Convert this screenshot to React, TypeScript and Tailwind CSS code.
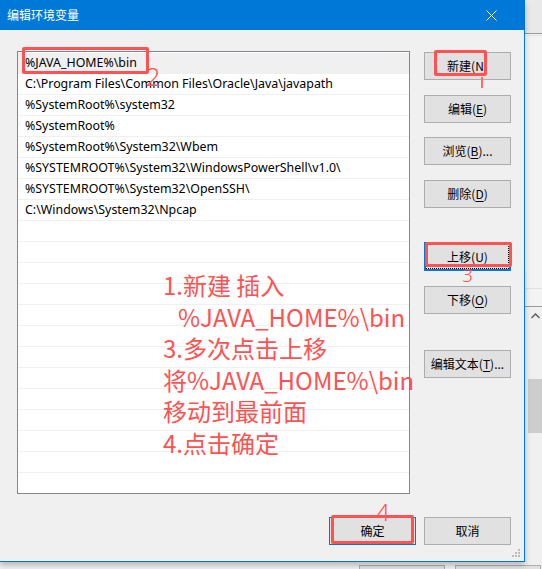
import React from 'react';

const rows = [
    '%JAVA_HOME%\\bin',
    'C:\\Program Files\\Common Files\\Oracle\\Java\\javapath',
    '%SystemRoot%\\system32',
    '%SystemRoot%',
    '%SystemRoot%\\System32\\Wbem',
    '%SYSTEMROOT%\\System32\\WindowsPowerShell\\v1.0\\',
    '%SYSTEMROOT%\\System32\\OpenSSH\\',
    'C:\\Windows\\System32\\Npcap',
];

const uiFont = "font-['Noto_Sans','Noto_Sans_CJK_SC',sans-serif]";

function WinButton({ label, mn, tail = '', className = '' }: { label: string; mn: string; tail?: string; className?: string }) {
    return (
        <div
            className={`w-[87px] h-[28px] flex items-center justify-center bg-[#e1e1e1] border border-[#adadad] text-[12px] text-black ${className}`}
        >
            <span>
                {label}(<span className="underline underline-offset-2">{mn}</span>){tail}
            </span>
        </div>
    );
}

export default function App() {
    const allRows = [...rows, ...Array(13).fill('')];

    return (
        <div className={`w-[542px] h-[569px] bg-[#f0f0f0] overflow-hidden flex flex-col ${uiFont}`}>
            <div className="flex h-[562px]">
                {/* dialog */}
                <div className="relative w-[525px] h-[562px] flex flex-col bg-[#f0f0f0] border-r border-b border-[#0078d7] shadow-[0_3px_6px_rgba(0,0,0,0.25)] z-10">
                    <div className="h-[30px] bg-[#0078d7] flex items-center justify-between pl-[7px] pr-[27px] text-white text-[12px]">
                        <span className="font-['Noto_Sans_CJK_SC',sans-serif]">编辑环境变量</span>
                        <svg width="11" height="11" viewBox="0 0 11 11">
                            <path d="M0.5 0.5 L10.5 10.5 M10.5 0.5 L0.5 10.5" stroke="white" strokeWidth="1" />
                        </svg>
                    </div>

                    <div className="flex-1 flex flex-col pt-[21px] pl-[17px] pr-[13px]">
                        <div className="flex">
                            {/* list box */}
                            <div className="w-[393px] h-[443px] border border-[#828790] bg-white pt-px overflow-hidden">
                                {allRows.map((r, i) => (
                                    <div
                                        key={i}
                                        className={`h-[21px] flex items-center pl-[7px] text-[12.4px] text-black whitespace-nowrap border-b border-[#f0f0f0] ${i === 0 ? 'bg-[#f0f0f0]' : ''}`}
                                    >
                                        {r}
                                    </div>
                                ))}
                            </div>

                            {/* buttons */}
                            <div className="ml-[14px] mt-px flex flex-col font-['Noto_Sans_CJK_SC',sans-serif]">
                                <WinButton label="新建" mn="N" />
                                <WinButton label="编辑" mn="E" className="mt-[15px]" />
                                <WinButton label="浏览" mn="B" tail="..." className="mt-[14px]" />
                                <WinButton label="删除" mn="D" className="mt-[15px]" />
                                <div className="mt-[34px] w-[87px] h-[29px] bg-[#e1e1e1] border-2 border-[#0078d7] flex items-center justify-center">
                                    <div className="w-[83px] h-[25px] border border-dotted border-black flex items-center justify-center text-[12px] text-black">
                                        <span>上移(<span className="underline underline-offset-2">U</span>)</span>
                                    </div>
                                </div>
                                <WinButton label="下移" mn="O" className="mt-[15px]" />
                                <WinButton label="编辑文本" mn="T" tail="..." className="mt-[36px]" />
                            </div>
                        </div>

                        <div className="mt-[23px] flex justify-end gap-[8px] font-['Noto_Sans_CJK_SC',sans-serif]">
                            <div className="w-[87px] h-[28px] flex items-center justify-center bg-[#e1e1e1] border border-[#0078d7] text-[12px] text-black">确定</div>
                            <div className="w-[87px] h-[28px] flex items-center justify-center bg-[#e1e1e1] border border-[#adadad] text-[12px] text-black">取消</div>
                        </div>
                    </div>

                    {/* size grip */}
                    <svg className="absolute right-[3px] bottom-[3px]" width="9" height="9" viewBox="0 0 9 9">
                        <g fill="#bcbcbc">
                            <rect x="6" y="0" width="2" height="2" />
                            <rect x="3" y="3" width="2" height="2" />
                            <rect x="6" y="3" width="2" height="2" />
                            <rect x="0" y="6" width="2" height="2" />
                            <rect x="3" y="6" width="2" height="2" />
                            <rect x="6" y="6" width="2" height="2" />
                        </g>
                    </svg>

                    {/* annotations */}
                    <div className="absolute left-[22px] top-[47px] w-[127px] h-[27px] border-[3px] border-[#ff5252] rounded-[2px]" />
                    <div className="absolute left-[146px] top-[64px] text-[25px] leading-none font-light text-[#ff5252]">2</div>
                    <div className="absolute left-[434px] top-[50px] w-[53px] h-[26px] border-[3px] border-[#ff5252] rounded-[2px]" />
                    <div className="absolute left-[481px] top-[77px] w-[2px] h-[11px] bg-[#ff6b6b]" />
                    <div className="absolute left-[425px] top-[242px] w-[87px] h-[25px] border-[3px] border-[#ff5252] rounded-[2px]" />
                    <div className="absolute left-[462px] top-[266px] text-[19px] leading-none font-light text-[#ff5252]">3</div>
                    <div className="absolute left-[331px] top-[515px] w-[83px] h-[29px] border-[3px] border-[#ff5252] rounded-[2px]" />
                    <div className="absolute left-[376px] top-[500px] text-[24px] leading-none font-light text-[#ff5252]">4</div>

                    <div className="absolute left-[163px] top-[269px] text-[24px] leading-[31.6px] text-[#ff5252] whitespace-nowrap font-['Noto_Sans_CJK_SC',sans-serif]">
                        <div>1.新建 插入</div>
                        <div className="pl-[15px]">%JAVA_HOME%\bin</div>
                        <div>3.多次点击上移</div>
                        <div>将%JAVA_HOME%\bin</div>
                        <div>移动到最前面</div>
                        <div>4.点击确定</div>
                    </div>
                </div>

                {/* background window edge */}
                <div className="w-[17px] h-[562px] flex flex-col bg-[#f3f3f3]">
                    <div className="h-[34px] bg-[#e9e9e9] border-b border-[#9a9a9a]" />
                    <div className="h-[237px] border-l-2 border-[#fafafa]">
                        <div className="h-[1px] mt-[1px] bg-[#e2e2e2]" />
                    </div>
                    <div className="h-[18px] border-b border-[#e0e0e0]" />
                    <div className="h-[18px] border-b border-[#9a9a9a]" />
                    <div className="flex-1 flex flex-col items-center bg-[#f0f0f0] pt-[6px] pl-[3px]">
                        <svg width="9" height="6" viewBox="0 0 9 6">
                            <path d="M0.5 5 L4.5 1 L8.5 5" stroke="#606060" strokeWidth="1.5" fill="none" />
                        </svg>
                        <div className="mt-[60px] w-full h-[54px] bg-[#cdcdcd]" />
                    </div>
                </div>
            </div>
            <div className="flex-1 flex gap-[10px] pl-[359px] pt-[3px]">
                <div className="w-[86px] h-[10px] border border-[#adadad] bg-[#e1e1e1]" />
                <div className="w-[86px] h-[10px] border border-[#adadad] bg-[#e1e1e1]" />
            </div>
        </div>
    );
}
